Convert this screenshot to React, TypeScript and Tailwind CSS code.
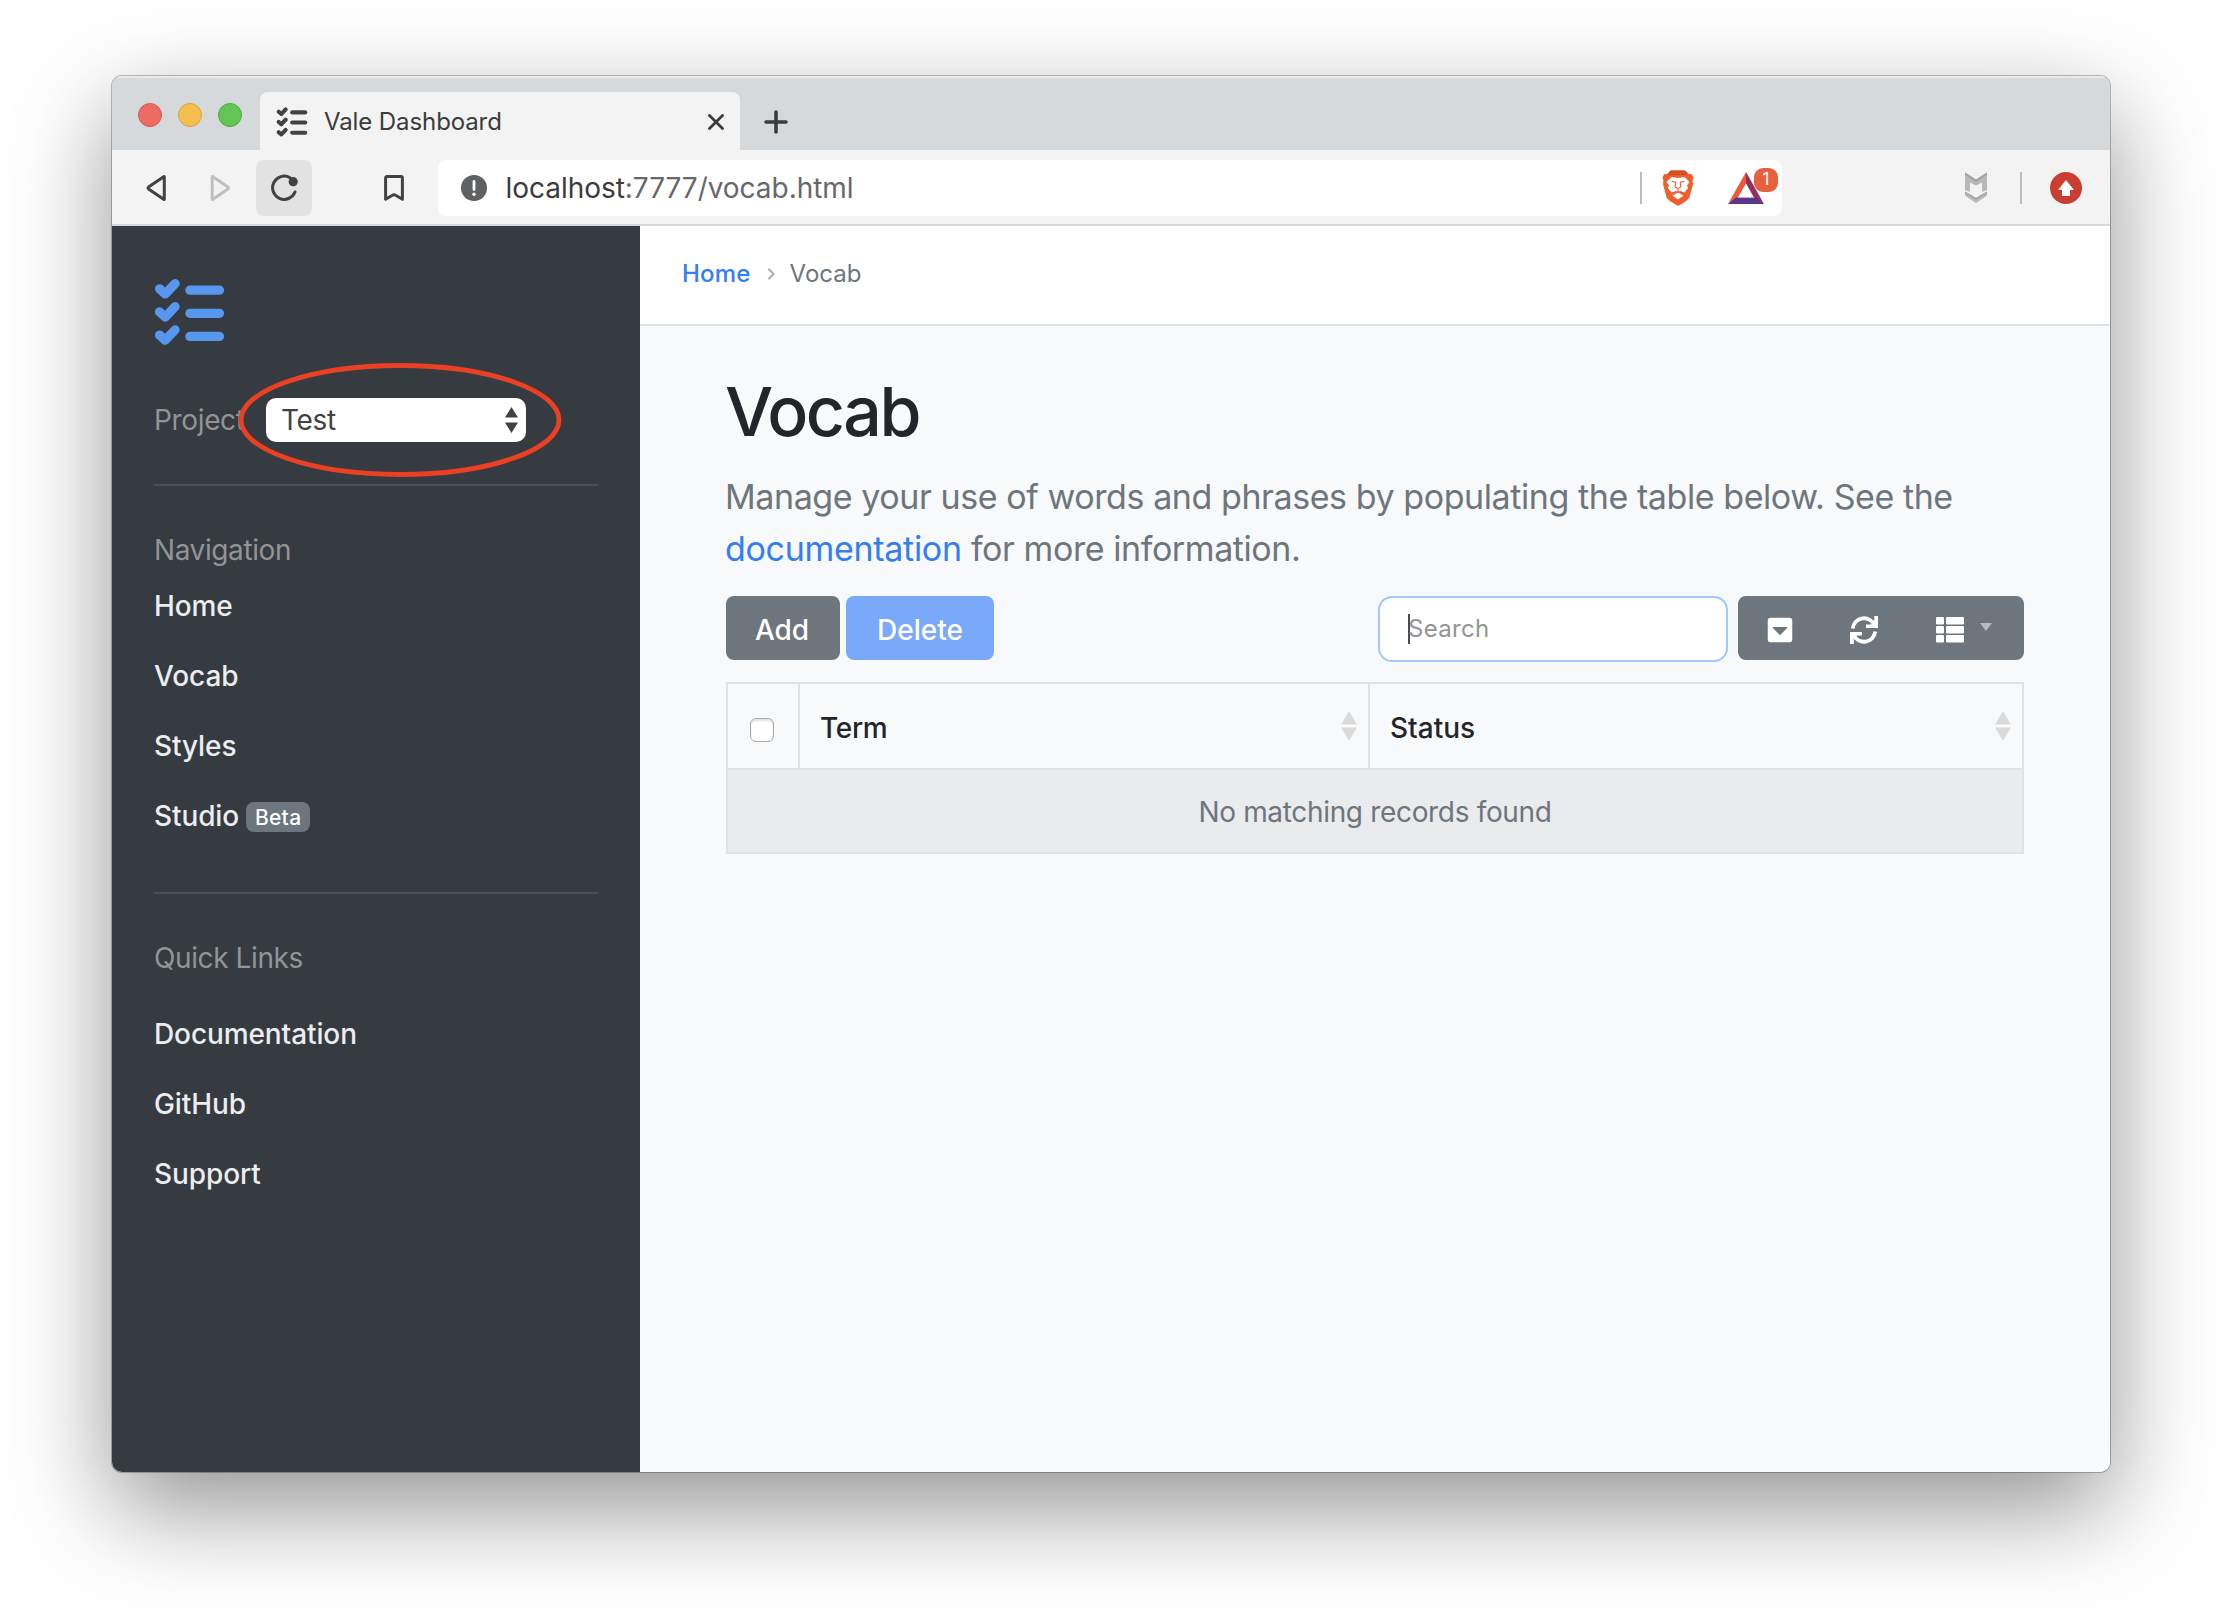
import React from "react";
import { FaCaretSquareDown } from "react-icons/fa";

const navigation = ["Home", "Vocab", "Styles", "Studio"];
const quickLinks = ["Documentation", "GitHub", "Support"];

function ChecklistIcon({ className }: { className: string }) {
  return (
    <svg viewBox="0 0 70 68" className={className} fill="none" stroke="currentColor" strokeLinecap="round" strokeLinejoin="round">
      {[0, 23.1, 46.2].map((y) => (
        <g key={y} transform={`translate(0 ${y})`}>
          <path d="M5 10.8 L10.8 16 L20.6 5.6" strokeWidth="9.2" />
          <path d="M35.4 12.2 H65" strokeWidth="9.2" />
        </g>
      ))}
    </svg>
  );
}

function SortArrows({ className }: { className: string }) {
  return (
    <svg viewBox="0 0 16 30" className={className} fill="currentColor">
      <path d="M8 0 L16 13.5 H0 Z M0 16.5 H16 L8 30 Z" />
    </svg>
  );
}

function BraveIcon() {
  return (
    <svg viewBox="0 0 32 36" className="h-9 w-8">
      <path d="M8.5 0.4 H23 L26.5 4 L30 4.2 L31.5 8 L30.5 10.5 L31 14 L27.3 28 L23.5 31.5 L16 36 L8.5 31.5 L4.7 28 L1 14 L1.5 10.5 L0.5 8 L2 4.2 L5.5 4 Z" fill="#ee5f2b" />
      <path d="M8.5 0.4 H23 L26.5 4 L23 5.6 L16 5 L9 5.6 L5.5 4 Z" fill="#d4511f" />
      <path
        d="M9.5 7 L16 8 L22.5 7 L27.5 12 L25 15.5 L26.2 18 L22.3 22.5 L18.5 21 L16 22 L13.5 21 L9.7 22.5 L5.8 18 L7 15.5 L4.5 12 Z"
        fill="#fff"
      />
      <path d="M9.5 11.2 L14 12.4 M22.5 11.2 L18 12.4 M13.8 12.4 L13.2 17 L16 18.4 L18.8 17 L18.2 12.4" fill="none" stroke="#ee5f2b" strokeWidth="1.1" />
      <path d="M16 22.6 L21.5 25.4 L16 29.6 L10.5 25.4 Z" fill="#fff" />
      <path d="M16 18.4 V22.6 M11 23.6 L16 21.6 L21 23.6" fill="none" stroke="#ee5f2b" strokeWidth="1.1" />
    </svg>
  );
}

function TitleBar() {
  return (
    <div className="flex h-[74px] items-end bg-[#d5d9dc] pl-[26px] shadow-[inset_0_2px_0_#e9ebed]">
      <div className="flex h-[74px] gap-4 pt-[27px]">
        <span className="size-6 rounded-full border border-[#d9564c] bg-[#ed6b60]" />
        <span className="size-6 rounded-full border border-[#dba23c] bg-[#f5bf50]" />
        <span className="size-6 rounded-full border border-[#4aab3c] bg-[#62c655]" />
      </div>
      <div className="ml-[18px] flex h-[58px] w-[480px] items-center rounded-t-lg bg-[#f3f3f3] pt-0.5 pr-4 pl-4">
        <ChecklistIcon className="h-[30px] w-8 text-[#424242]" />
        <span className="ml-4 flex-1 text-2xl tracking-[-0.1px] text-[#3b3b3b]">Vale Dashboard</span>
        <svg viewBox="0 0 16 16" className="size-4" fill="none" stroke="#3b3b3b" strokeWidth="2.8" strokeLinecap="round">
          <path d="M1.5 1.5 L14.5 14.5 M14.5 1.5 L1.5 14.5" />
        </svg>
      </div>
      <svg viewBox="0 0 24 24" className="mb-4 ml-6 size-6" fill="none" stroke="#3b3b3b" strokeWidth="3.6" strokeLinecap="round">
        <path d="M12 2 V22 M2 12 H22" />
      </svg>
    </div>
  );
}

function AddressBar() {
  return (
    <div className="flex h-[76px] items-center border-b-2 border-[#d5d9dc] bg-[#f3f3f3] pt-0.5">
      <svg viewBox="0 0 20 28" className="ml-[34px] h-7 w-5" fill="none" stroke="#424242" strokeWidth="3" strokeLinejoin="round">
        <path d="M18.3 2.8 V25.2 Q18.3 25.8 17.6 25.3 L2.6 15 Q1.6 14 2.6 13 L17.6 2.7 Q18.3 2.2 18.3 2.8 Z" />
      </svg>
      <svg viewBox="0 0 20 28" className="ml-[44px] h-7 w-5" fill="none" stroke="#bfbfbf" strokeWidth="3" strokeLinejoin="round">
        <path d="M2.2 2.8 V25.2 Q2.2 25.8 2.9 25.3 L17.9 15 Q18.9 14 17.9 13 L2.9 2.7 Q2.2 2.2 2.2 2.8 Z" />
      </svg>
      <div className="ml-[26px] flex size-14 items-center justify-center rounded-lg bg-[#e2e2e2]">
        <svg viewBox="0 0 28 28" className="size-7" fill="none" stroke="#424242" strokeWidth="3" strokeLinecap="round">
          <path d="M20 3.7 A11.6 11.6 0 1 0 25 18" />
          <circle cx="23.2" cy="7.7" r="4.6" fill="#424242" stroke="none" />
        </svg>
      </div>
      <svg viewBox="0 0 20 26" className="ml-[72px] h-[26px] w-5" fill="none" stroke="#424242" strokeWidth="3" strokeLinejoin="round">
        <path d="M1.6 3 Q1.6 1.6 3 1.6 H17 Q18.4 1.6 18.4 3 V24.2 L11.6 20.2 Q10 19.2 8.4 20.2 L1.6 24.2 Z" />
      </svg>
      <div className="ml-[34px] flex h-14 w-[1344px] items-center rounded-lg bg-white pl-[23px]">
        <svg viewBox="0 0 26 26" className="size-[26px]">
          <circle cx="13" cy="13" r="13" fill="#5f6062" />
          <path d="M13 6.5 V14.5" stroke="#fff" strokeWidth="2.8" strokeLinecap="round" />
          <circle cx="13" cy="19.3" r="1.7" fill="#fff" />
        </svg>
        <span className="ml-[18.5px] flex-1 text-[28px] tracking-[-0.04px] text-[#66686a]">
          <span className="text-[#3b3b3b]">localhost</span>:7777/vocab.html
        </span>
        <span className="h-8 w-0.5 bg-[#bcbcbc]" />
        <span className="ml-5">
          <BraveIcon />
        </span>
        <span className="relative mr-[18px] ml-[34px]">
          <svg viewBox="0 0 36 32" className="h-8 w-9">
            <path d="M18 0 V12 L10.5 25 L0 32 Z" fill="#ec5a3c" />
            <path d="M18 0 L36 32 L25.5 25 L18 12 Z" fill="#942f60" />
            <path d="M0 32 L8 25.5 H28 L36 32 Z" fill="#5b348c" />
            <path d="M18 11.5 L25.6 25.2 H10.4 Z" fill="#fff" />
          </svg>
          <span className="absolute -top-1 left-[26px] flex size-6 items-center justify-center rounded-[9px] bg-[#e8613f] text-[17px] text-white">1</span>
        </span>
      </div>
      <svg viewBox="0 0 24 32" className="ml-[182px] h-8 w-6">
        <path d="M1 0.5 L12 7.5 L23 0.5 V18 L18 20 V10.5 L12 13.5 L6 10.5 V20 L1 18 Z" fill="#b9b9b9" />
        <path d="M1 0.5 L12 7.5 L23 0.5 V3 L12 10 L1 3 Z" fill="#a3a3a3" />
        <path d="M1 19.5 L12 26 L23 19.5 V23.5 L12 31 L1 23.5 Z" fill="#b9b9b9" />
        <path d="M1 19.5 L12 26 L23 19.5 V21 L12 28 L1 21 Z" fill="#a3a3a3" />
      </svg>
      <span className="ml-8 h-8 w-0.5 bg-[#bcbcbc]" />
      <svg viewBox="0 0 32 32" className="ml-7 size-8">
        <circle cx="16" cy="16" r="16" fill="#c93e31" />
        <path d="M16 8 L24 18 H20 V24 H12 V18 H8 Z" fill="#fff" />
      </svg>
    </div>
  );
}

function Sidebar() {
  return (
    <aside className="w-[528px] shrink-0 bg-[#363a41] px-[42px] pt-[52px] text-[28px] leading-[42px]">
      <ChecklistIcon className="h-[68px] w-[71px] text-[#5897ee]" />
      <div className="relative mt-[52px] flex h-11 items-center tracking-[-0.35px] text-[#929496]">
        <span className="w-28">Project</span>
        <div className="flex h-11 w-[260px] items-center justify-between rounded-[10px] bg-white pr-2 pl-[15px] text-[#424242]">
          <span>Test</span>
          <svg viewBox="0 0 13 26" className="h-[26px] w-[13px]" fill="#424242">
            <path d="M6.5 0 L13 10.5 H0 Z M0 15.5 H13 L6.5 26 Z" />
          </svg>
        </div>
        <svg viewBox="0 0 324 116" className="absolute -top-9 left-[84px] h-[116px] w-[324px]" fill="none">
          <ellipse cx="162" cy="58" rx="159" ry="54.5" stroke="#eb4024" strokeWidth="4.8" />
        </svg>
      </div>
      <hr className="mt-[42px] w-[444px] border-t-2 border-[#4b4e51]" />
      <h2 className="mt-[43px] tracking-[-0.4px] text-[#929496]">Navigation</h2>
      <nav className="font-medium tracking-[-0.1px] text-[#ecedee]">
        {navigation.map((item) => (
          <a key={item} className="flex h-[70px] items-center">
            {item}
            {item === "Studio" && (
              <span className="mt-0.5 ml-[7px] flex h-[30px] w-16 items-center justify-center rounded-lg bg-[#6d757d] pt-0.5 text-[21px] tracking-[0.3px] text-white">
                Beta
              </span>
            )}
          </a>
        ))}
      </nav>
      <hr className="mt-[41px] w-[444px] border-t-2 border-[#4b4e51]" />
      <h2 className="mt-[43px] tracking-[-0.4px] text-[#929496]">Quick Links</h2>
      <nav className="mt-5 font-medium tracking-[-0.1px] text-[#ecedee]">
        {quickLinks.map((item) => (
          <a key={item} className="flex h-[70px] items-center">
            {item}
          </a>
        ))}
      </nav>
    </aside>
  );
}

function Toolbar() {
  return (
    <div className="mt-[21px] flex h-[66px] items-start text-[28px] font-medium text-white">
      <button className="h-16 w-[114px] rounded-lg bg-[#6d757d] pt-[3px] pr-0.5">Add</button>
      <button className="ml-1.5 h-16 w-[148px] rounded-lg bg-[#7ba9f9] pt-[3px]">Delete</button>
      <div className="ml-auto flex h-[66px] w-[350px] items-center rounded-[14px] border-2 border-[#a0c8fb] bg-white pl-7 text-2xl font-normal text-[#929496]">
        <span className="h-[30px] w-0.5 bg-[#4a4a4a]" />
        <span className="-ml-0.5 tracking-[0.3px]">Search</span>
      </div>
      <div className="ml-2.5 flex h-16 w-[286px] items-center rounded-lg bg-[#6d757d] pt-1 pl-7">
        <FaCaretSquareDown className="size-7" />
        <svg viewBox="0 0 28 28" className="ml-14 size-7" fill="none" stroke="#fff" strokeWidth="3.8">
          <path d="M2.8 12.5 A11.3 11.3 0 0 1 24.4 9 M25.2 15.5 A11.3 11.3 0 0 1 3.6 19" />
          <path d="M28 0 V12 H16 V8.6 H20.8 L24.2 5 V0 Z M0 28 V16 H12 V19.4 H7.2 L3.8 23 V28 Z" fill="#fff" stroke="none" />
        </svg>
        <svg viewBox="0 0 28 26" className="ml-[58px] h-[26px] w-7" fill="#fff">
          {[0, 9, 18].map((y) => (
            <g key={y}>
              <rect x="0" y={y} width="8" height="7.5" rx="1.3" />
              <rect x="10" y={y} width="18" height="7.5" rx="1.3" />
            </g>
          ))}
        </svg>
        <svg viewBox="0 0 12 8" className="mb-1.5 ml-4 h-2 w-3" fill="#b9babc">
          <path d="M0 0 H12 L6 8 Z" />
        </svg>
      </div>
    </div>
  );
}

function TermsTable() {
  return (
    <div className="mt-5 h-[172px] border-2 border-[#dfe1e7] text-[28px]">
      <div className="flex h-[86px] items-stretch border-b-2 border-[#dfe1e7] font-medium text-[#22252a]">
        <div className="flex w-[72px] border-r-2 border-[#dfe1e7] pt-[34px] pl-[22px]">
          <span className="size-6 rounded-[6px] border border-[#a9a9a9] bg-white shadow-[inset_0_2px_2px_rgba(0,0,0,0.12)]" />
        </div>
        <div className="flex w-[570px] items-center justify-between border-r-2 border-[#dfe1e7] pt-1 pr-[11px] pl-5">
          <span className="tracking-[-0.3px]">Term</span>
          <SortArrows className="mb-1 h-[30px] w-4 text-[#dadada]" />
        </div>
        <div className="flex flex-1 items-center justify-between pt-1 pr-[11px] pl-5">
          <span>Status</span>
          <SortArrows className="mb-1 h-[30px] w-4 text-[#dadada]" />
        </div>
      </div>
      <div className="flex h-[82px] items-center justify-center bg-[#eaebed] pt-0.5 tracking-[-0.33px] text-[#6d757d]">
        No matching records found
      </div>
    </div>
  );
}

export default function App() {
  return (
    <div className="h-[1620px] w-[2222px] overflow-hidden bg-white px-28 pt-[76px] font-['Inter','Liberation_Sans',sans-serif]">
      <div className="flex h-[1396px] w-[1998px] flex-col rounded-[10px] shadow-[0_0_0_1px_rgba(0,0,0,0.25),0_36px_100px_rgba(0,0,0,0.43)]">
        <div className="flex flex-1 flex-col overflow-hidden rounded-[10px]">
          <TitleBar />
          <AddressBar />
          <div className="flex flex-1">
            <Sidebar />
            <main className="flex-1 bg-[#f8f9fb]">
              <div className="flex h-[100px] items-start border-b-2 border-[#dee2e6] bg-white pt-[30px] pl-[42px] text-2xl leading-9">
                <a className="font-medium tracking-[0.2px] text-[#347df6]">Home</a>
                <svg viewBox="0 0 8 12" className="mt-3 mr-[15px] ml-[16px] h-3 w-2" fill="none" stroke="#a9aeb3" strokeWidth="2">
                  <path d="M1.5 0.8 L6.5 6 L1.5 11.2" />
                </svg>
                <span className="text-[#6d757d]">Vocab</span>
              </div>
              <div className="pt-11 pr-[86px] pl-[86px]">
                <h1 className="-ml-px text-[68px] leading-[82px] font-medium tracking-[-2.4px] text-[#22252a]">Vocab</h1>
                <p className="mt-[19px] -ml-px text-[34px] leading-[52px] tracking-[-0.42px] whitespace-nowrap text-[#6d757d]">
                  Manage your use of words and phrases by populating the table below. See the
                  <br />
                  <a className="tracking-[-0.3px] text-[#347df6]">documentation</a> for more information.
                </p>
                <Toolbar />
                <TermsTable />
              </div>
            </main>
          </div>
        </div>
      </div>
    </div>
  );
}
